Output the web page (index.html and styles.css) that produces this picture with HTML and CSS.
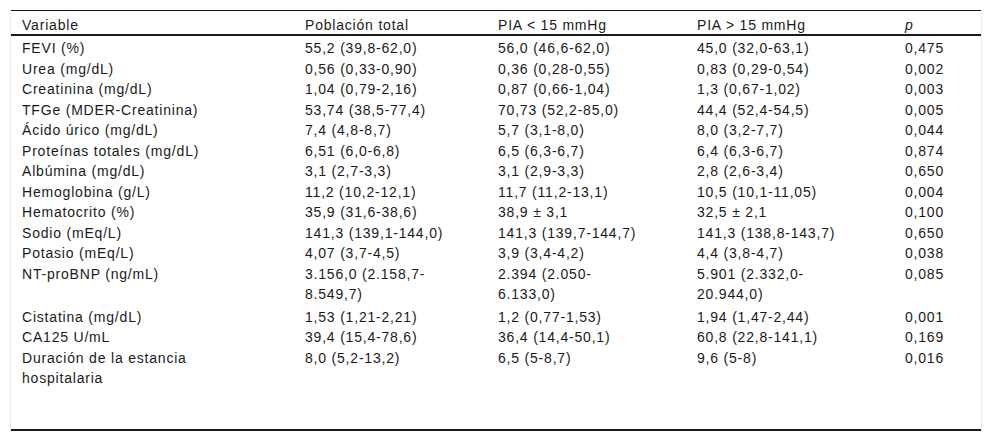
FILE: index.html
```html
<!DOCTYPE html>
<html lang="es">
<head>
<meta charset="utf-8">
<title>Tabla</title>
<link rel="stylesheet" href="styles.css">
</head>
<body>
<div class="wrap">
<table class="data">
<colgroup>
<col class="c1"><col class="c2"><col class="c3"><col class="c4"><col class="c5">
</colgroup>
<thead>
<tr><th>Variable</th><th>Población total</th><th>PIA &lt; 15 mmHg</th><th>PIA &gt; 15 mmHg</th><th><i>p</i></th></tr>
</thead>
<tbody>
<tr class="first"><td>FEVI (%)</td><td>55,2 (39,8-62,0)</td><td>56,0 (46,6-62,0)</td><td>45,0 (32,0-63,1)</td><td>0,475</td></tr>
<tr><td>Urea (mg/dL)</td><td>0,56 (0,33-0,90)</td><td>0,36 (0,28-0,55)</td><td>0,83 (0,29-0,54)</td><td>0,002</td></tr>
<tr><td>Creatinina (mg/dL)</td><td>1,04 (0,79-2,16)</td><td>0,87 (0,66-1,04)</td><td>1,3 (0,67-1,02)</td><td>0,003</td></tr>
<tr><td>TFGe (MDER-Creatinina)</td><td>53,74 (38,5-77,4)</td><td>70,73 (52,2-85,0)</td><td>44,4 (52,4-54,5)</td><td>0,005</td></tr>
<tr><td>Ácido úrico (mg/dL)</td><td>7,4 (4,8-8,7)</td><td>5,7 (3,1-8,0)</td><td>8,0 (3,2-7,7)</td><td>0,044</td></tr>
<tr><td>Proteínas totales (mg/dL)</td><td>6,51 (6,0-6,8)</td><td>6,5 (6,3-6,7)</td><td>6,4 (6,3-6,7)</td><td>0,874</td></tr>
<tr><td>Albúmina (mg/dL)</td><td>3,1 (2,7-3,3)</td><td>3,1 (2,9-3,3)</td><td>2,8 (2,6-3,4)</td><td>0,650</td></tr>
<tr><td>Hemoglobina (g/L)</td><td>11,2 (10,2-12,1)</td><td>11,7 (11,2-13,1)</td><td>10,5 (10,1-11,05)</td><td>0,004</td></tr>
<tr><td>Hematocrito (%)</td><td>35,9 (31,6-38,6)</td><td>38,9 ± 3,1</td><td>32,5 ± 2,1</td><td>0,100</td></tr>
<tr><td>Sodio (mEq/L)</td><td>141,3 (139,1-144,0)</td><td>141,3 (139,7-144,7)</td><td>141,3 (138,8-143,7)</td><td>0,650</td></tr>
<tr><td>Potasio (mEq/L)</td><td>4,07 (3,7-4,5)</td><td>3,9 (3,4-4,2)</td><td>4,4 (3,8-4,7)</td><td>0,038</td></tr>
<tr class="multi"><td>NT-proBNP (ng/mL)</td><td>3.156,0 (2.158,7-8.549,7)</td><td>2.394 (2.050-6.133,0)</td><td>5.901 (2.332,0-20.944,0)</td><td>0,085</td></tr>
<tr><td>Cistatina (mg/dL)</td><td>1,53 (1,21-2,21)</td><td>1,2 (0,77-1,53)</td><td>1,94 (1,47-2,44)</td><td>0,001</td></tr>
<tr><td>CA125 U/mL</td><td>39,4 (15,4-78,6)</td><td>36,4 (14,4-50,1)</td><td>60,8 (22,8-141,1)</td><td>0,169</td></tr>
<tr class="last"><td>Duración de la estancia hospitalaria</td><td>8,0 (5,2-13,2)</td><td>6,5 (5-8,7)</td><td>9,6 (5-8)</td><td>0,016</td></tr>
</tbody>
</table>
</div>
</body>
</html>
```
FILE: styles.css
```css
html, body {
  margin: 0;
  padding: 0;
  background: #ffffff;
}

.wrap {
  margin: 10px 0 0 10px;
  width: 970px;
  border-left: 1px solid #ececec;
  border-right: 1px solid #ececec;
}

.data {
  width: 100%;
  border-collapse: collapse;
  table-layout: fixed;
  font-family: "Liberation Sans", Arial, sans-serif;
  font-size: 14px;
  letter-spacing: 0.8px;
  color: #1a1a1a;
  border-top: 1px solid #1a1a1a;
  border-bottom: 2px solid #1a1a1a;
}

.c1 { width: 283px; }
.c2 { width: 193px; }
.c3 { width: 199px; }
.c4 { width: 208px; }
.c5 { width: 87px; }

.data th {
  font-weight: normal;
  text-align: left;
  vertical-align: top;
  line-height: 18px;
  padding: 5px 36px 0 11px;
  border-bottom: 2px solid #1a1a1a;
}

.data td {
  vertical-align: top;
  line-height: 20.5px;
  padding: 0 36px 0 11px;
}

.data th:nth-child(2), .data td:nth-child(2) { padding-right: 40px; }
.data th:nth-child(3), .data td:nth-child(3) { padding-right: 45px; }
.data th:nth-child(4), .data td:nth-child(4) { padding-right: 50px; }
.data th:nth-child(5), .data td:nth-child(5) { padding-right: 8px; }

.data tr.first td { padding-top: 2px; }
.data tr.multi td { padding-bottom: 2px; }
.data tr.last td { padding-bottom: 40px; }
```
